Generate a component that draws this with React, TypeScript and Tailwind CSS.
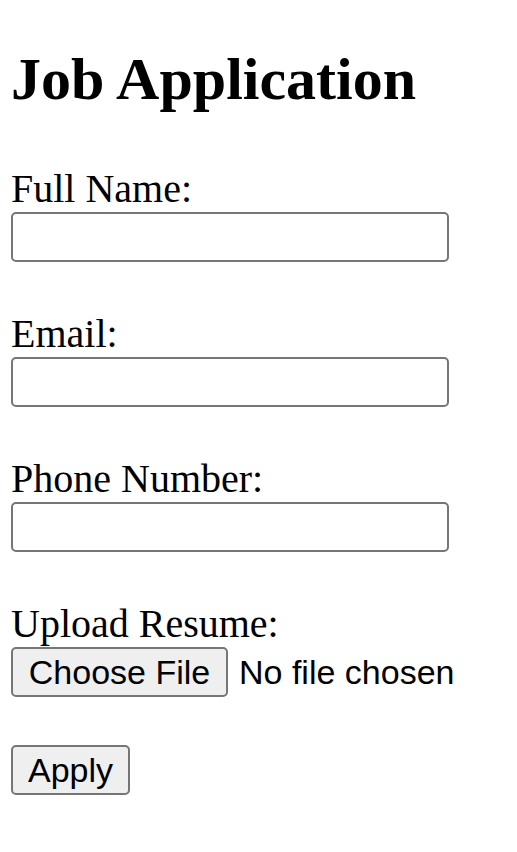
const fields = ['Full Name:', 'Email:', 'Phone Number:']

export default function App() {
  return (
    <div className="min-h-[852px] bg-white pl-[11px] pt-[46px] text-black">
      <h1 className="font-['Liberation_Serif',serif] text-[60px] font-bold leading-[66px]">
        Job Application
      </h1>

      <form className="mt-[54px] flex flex-col" onSubmit={(e) => e.preventDefault()}>
        {fields.map((label) => (
          <div key={label} className="mb-[49px] flex flex-col">
            <label className="font-['Liberation_Serif',serif] text-[40px] leading-[46px]">{label}</label>
            <input
              type="text"
              className="h-[50px] w-[438px] rounded-[5px] border-2 border-[#767676] bg-white px-2 font-['Liberation_Sans',sans-serif] text-[34px] outline-none"
            />
          </div>
        ))}

        <div className="mb-[48px] flex flex-col">
          <label className="font-['Liberation_Serif',serif] text-[40px] leading-[46px]">Upload Resume:</label>
          <div className="flex items-center gap-[11px] font-['Liberation_Sans',sans-serif] text-[34px]">
            <button
              type="button"
              className="flex h-[50px] w-[217px] items-center justify-center rounded-[5px] border-2 border-[#767676] bg-[#efefef] leading-none"
            >
              Choose File
            </button>
            <span className="leading-none">No file chosen</span>
          </div>
        </div>

        <div>
          <button
            type="submit"
            className="flex h-[50px] w-[119px] items-center justify-center rounded-[5px] border-2 border-[#767676] bg-[#efefef] font-['Liberation_Sans',sans-serif] text-[34px] leading-none"
          >
            Apply
          </button>
        </div>
      </form>
    </div>
  )
}
